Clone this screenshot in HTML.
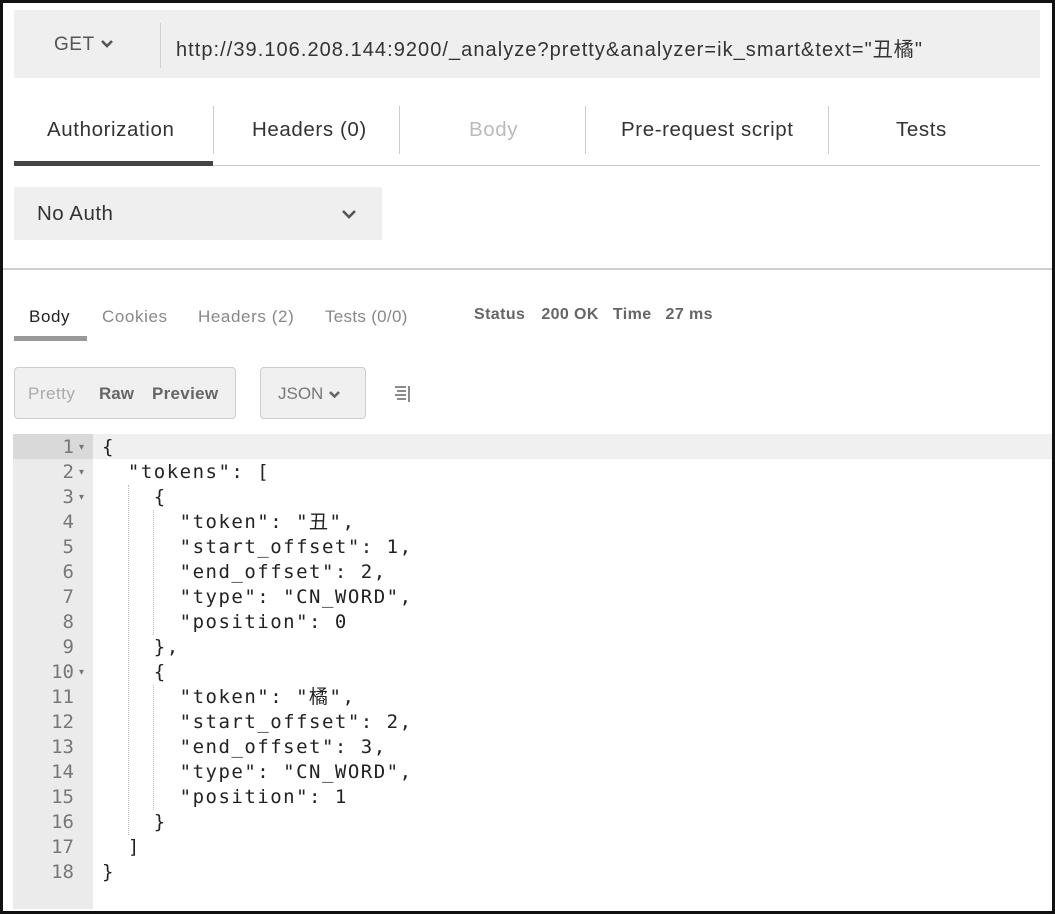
<!DOCTYPE html>
<html><head><meta charset="utf-8"><style>
*{margin:0;padding:0;box-sizing:border-box}
body{width:1055px;height:914px;background:#fff;position:relative;overflow:hidden;font-family:"Liberation Sans","Noto Sans CJK SC",sans-serif;color:#333}
.frame{position:absolute;left:0;top:0;width:1055px;height:914px;border:3px solid #111;z-index:10;pointer-events:none}
.abs{position:absolute;white-space:nowrap}
.bar{left:14px;top:10px;width:1026px;height:68px;background:#efefef}
.tab{top:118px;font-size:20.5px;letter-spacing:0.6px;color:#333}
.div{width:1px;background:#ccc}
.code{font-family:"DejaVu Sans Mono","Liberation Mono","Noto Sans CJK SC",monospace;font-size:19px;letter-spacing:1.5px;color:#222;white-space:pre}
.ln{font-family:"DejaVu Sans Mono","Liberation Mono",monospace;font-size:19px;color:#777;text-align:right;width:62px;left:12px;white-space:pre}
.ar{font-size:10px;color:#777;left:79px;white-space:pre}
.g{position:absolute;border-left:1px dotted #bbb}
</style></head><body>
<div class="frame"></div>
<div class="abs bar"></div>
<div class="abs" style="left:54px;top:34px;font-size:19px;color:#555;letter-spacing:0.5px">GET <svg width="14" height="10" viewBox="0 0 14 10" style="vertical-align:1px"><path d="M2 2l5 5 5-5" stroke="#555" stroke-width="2.6" fill="none"/></svg></div>
<div class="abs div" style="left:160px;top:23px;height:45px;background:#d0d0d0"></div>
<div class="abs" style="left:176px;top:33px;font-size:20px;letter-spacing:1.05px;color:#333">http://39.106.208.144:9200/_analyze?pretty&amp;analyzer=ik_smart&amp;text="丑橘"</div>

<div class="abs tab" style="left:47px">Authorization</div>
<div class="abs tab" style="left:252px">Headers (0)</div>
<div class="abs tab" style="left:469px;color:#bbb">Body</div>
<div class="abs tab" style="left:621px">Pre-request script</div>
<div class="abs tab" style="left:896px">Tests</div>
<div class="abs div" style="left:213px;top:106px;height:48px"></div>
<div class="abs div" style="left:399px;top:106px;height:48px"></div>
<div class="abs div" style="left:585px;top:106px;height:48px"></div>
<div class="abs div" style="left:828px;top:106px;height:48px"></div>
<div class="abs" style="left:14px;top:165px;width:1026px;height:1px;background:#ccc"></div>
<div class="abs" style="left:14px;top:161px;width:199px;height:5px;background:#444"></div>

<div class="abs" style="left:14px;top:187px;width:368px;height:53px;background:#efefef"></div>
<div class="abs" style="left:37px;top:202px;font-size:20.5px;letter-spacing:0.5px;color:#333">No Auth</div>
<svg class="abs" style="left:341px;top:209px" width="16" height="11" viewBox="0 0 16 11"><path d="M2 2l6 6 6-6" stroke="#555" stroke-width="2.6" fill="none"/></svg>

<div class="abs" style="left:3px;top:268px;width:1049px;height:2px;background:#d0d0d0"></div>

<div class="abs" style="left:29px;top:307px;font-size:17px;letter-spacing:0.6px;color:#222">Body</div>
<div class="abs" style="left:102px;top:307px;font-size:17px;letter-spacing:0.6px;color:#888">Cookies</div>
<div class="abs" style="left:198px;top:307px;font-size:17px;letter-spacing:0.6px;color:#888">Headers (2)</div>
<div class="abs" style="left:325px;top:307px;font-size:17px;letter-spacing:0.3px;color:#888">Tests (0/0)</div>
<div class="abs" style="left:14px;top:336px;width:73px;height:5px;background:#999"></div>
<div class="abs" style="left:474px;top:306px;font-size:16px;font-weight:bold;letter-spacing:0.4px;color:#666">Status<span style="margin-left:16px">200 OK</span><span style="margin-left:14px">Time</span><span style="margin-left:14px">27 ms</span></div>

<div class="abs" style="left:14px;top:367px;width:222px;height:52px;background:#f0f0f0;border:1px solid #ccc;border-radius:4px"></div>
<div class="abs" style="left:28px;top:384px;font-size:17px;color:#aaa;letter-spacing:0.5px">Pretty</div>
<div class="abs" style="left:99px;top:384px;font-size:17px;font-weight:bold;color:#666">Raw</div>
<div class="abs" style="left:152px;top:384px;font-size:17px;font-weight:bold;color:#666;letter-spacing:0.3px">Preview</div>
<div class="abs" style="left:260px;top:367px;width:106px;height:52px;background:#f0f0f0;border:1px solid #ccc;border-radius:4px"></div>
<div class="abs" style="left:278px;top:384px;font-size:17px;color:#777">JSON <svg width="13" height="9" viewBox="0 0 13 9"><path d="M2 2l4.5 4.5L11 2" stroke="#666" stroke-width="2.6" fill="none"/></svg></div>
<svg class="abs" style="left:393px;top:384px" width="20" height="20" viewBox="0 0 20 20"><path d="M2 3h11M4 7h9M2 11h11M4 15h9M16 2v16" stroke="#666" stroke-width="1.5" fill="none"/></svg>

<div class="abs" style="left:13px;top:434px;width:80px;height:475px;background:#ebebeb"></div>
<div class="abs" style="left:13px;top:434px;width:80px;height:25px;background:#d9d9d9"></div>
<div class="abs" style="left:93px;top:434px;width:959px;height:25px;background:#f0f0f0"></div>
<div class="g" style="left:153px;top:510px;height:125px"></div>
<div class="g" style="left:153px;top:685px;height:125px"></div>
<div class="g" style="left:128px;top:485px;height:350px"></div>

<div class="abs ln" style="top:435px;line-height:25px">1
2
3
4
5
6
7
8
9
10
11
12
13
14
15
16
17
18</div>
<div class="abs ar" style="top:435px;line-height:25px">▾
▾
▾






▾</div>
<div class="abs code" style="left:102px;top:435px;line-height:25px">{
  "tokens": [
    {
      "token": "丑",
      "start_offset": 1,
      "end_offset": 2,
      "type": "CN_WORD",
      "position": 0
    },
    {
      "token": "橘",
      "start_offset": 2,
      "end_offset": 3,
      "type": "CN_WORD",
      "position": 1
    }
  ]
}</div>
</body></html>
